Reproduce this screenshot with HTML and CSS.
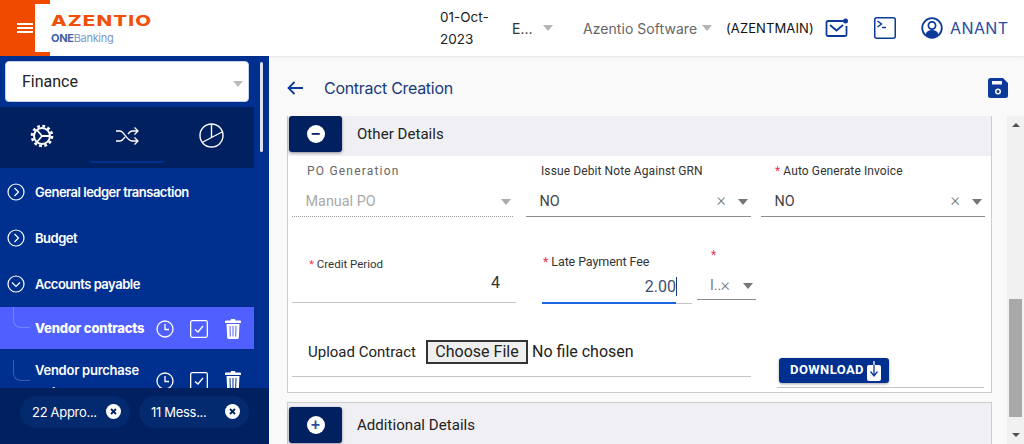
FILE: index.html
```html
<!DOCTYPE html>
<html lang="en">
<head>
    <meta charset="UTF-8">
    <title>Contract Creation</title>
    <link rel="stylesheet" href="styles.css">
</head>
<body>
<header class="topbar">
    <div class="menu-block">
        <div class="menu-lines"><i></i><i></i><i></i></div>
        <div class="logo-notch"></div>
    </div>
    <div class="logo">
        <div class="logo-name">AZENTIO</div>
        <div class="logo-sub"><b>ONE</b>Banking</div>
    </div>
    <div class="top-date">01-Oct-<br>2023</div>
    <div class="top-lang">E...</div>
    <span class="caret top-caret-lang"></span>
    <div class="top-company">Azentio Software</div>
    <span class="caret top-caret-company"></span>
    <div class="top-code">(AZENTMAIN)</div>
    <svg class="top-mail" width="24" height="20" viewBox="0 0 24 20" fill="none" stroke="#0b3a9a" stroke-width="1.800">
        <path d="M18 3H3a1.500 1.500 0 0 0-1.500 1.500v12A1.500 1.500 0 0 0 3 18h17a1.500 1.500 0 0 0 1.500-1.500V8"/>
        <path d="M5 7l6.500 5.500L18 7"/>
        <circle cx="20.500" cy="3" r="2.500" fill="#0b3a9a" stroke="none"/>
    </svg>
    <svg class="top-term" width="22" height="22" viewBox="0 0 22 22" fill="none" stroke="#0b3a9a" stroke-width="1.500">
        <rect x="0.750" y="0.750" width="20.500" height="20.500" rx="2"/>
        <path d="M3.500 4l4 3-4 3M8 10.500h4"/>
    </svg>
    <svg class="top-user" width="22" height="22" viewBox="0 0 22 22">
        <circle cx="11" cy="11" r="9.800" fill="none" stroke="#0b3a9a" stroke-width="1.800"/>
        <circle cx="11" cy="8.500" r="3.600" fill="none" stroke="#0b3a9a" stroke-width="1.800"/>
        <path d="M4.500 17.500c1-3.500 4-4.500 6.500-4.500s5.500 1 6.500 4.500A9.800 9.800 0 0 1 11 20.800a9.800 9.800 0 0 1-6.500-3.300z" fill="#0b3a9a"/>
    </svg>
    <div class="top-name">ANANT</div>
</header>

<div class="layout">
    <aside class="sidebar">
        <div class="module-wrap">
            <div class="module-select">Finance<span class="caret module-caret"></span></div>
        </div>
        <div class="side-tabs">
            <div class="side-tab">
                <svg width="24" height="24" viewBox="0 0 24 24" fill="none" stroke="#fff">
                    <circle cx="12" cy="12" r="8" stroke-width="2"/>
                    <circle cx="12" cy="12" r="10" stroke-width="2.600" stroke-dasharray="2.800 2.440"/>
                    <path d="M12 12L7 6M12 12L7 18M12 12h8" stroke-width="1.800"/>
                </svg>
            </div>
            <div class="side-tab side-tab-on">
                <svg width="24" height="20" viewBox="0 0 24 20" fill="none" stroke="#fff" stroke-width="1.300">
                    <path d="M1 5h4c4 0 7 10 12 10h6M1 15h4c2 0 3.500-2 5-4M13 8c1.300-1.700 2.500-3 4-3h6"/>
                    <path d="M19.500 1.500L23 5l-3.500 3.500M19.500 11.500L23 15l-3.500 3.500"/>
                </svg>
            </div>
            <div class="side-tab">
                <svg width="25" height="25" viewBox="0 0 25 25" fill="none" stroke="#fff" stroke-width="1.400">
                    <circle cx="12.500" cy="12.500" r="11.500"/>
                    <path d="M12.500 1v13M3 19.500l20-10.500"/>
                </svg>
            </div>
        </div>
        <nav class="side-nav">
            <div class="nav-item">
                <svg width="18" height="18" viewBox="0 0 18 18" fill="none" stroke="#fff" stroke-width="1.200"><circle cx="9" cy="9" r="8"/><path d="M7.500 5l4 4-4 4"/></svg>
                <span>General ledger transaction</span>
            </div>
            <div class="nav-item">
                <svg width="18" height="18" viewBox="0 0 18 18" fill="none" stroke="#fff" stroke-width="1.200"><circle cx="9" cy="9" r="8"/><path d="M7.500 5l4 4-4 4"/></svg>
                <span>Budget</span>
            </div>
            <div class="nav-item">
                <svg width="18" height="18" viewBox="0 0 18 18" fill="none" stroke="#fff" stroke-width="1.200"><circle cx="9" cy="9" r="8"/><path d="M5 7.500l4 4 4-4"/></svg>
                <span>Accounts payable</span>
            </div>
            <div class="sub-item sub-item-on">
                <div class="sub-line"></div>
                <div class="sub-text">Vendor contracts</div>
                <div class="sub-icons">
                    <svg width="18" height="18" viewBox="0 0 18 18" fill="none" stroke="#fff" stroke-width="1.300"><circle cx="9" cy="9" r="8"/><path d="M9 4v5.500h4"/></svg>
                    <svg width="18" height="18" viewBox="0 0 18 18" fill="none" stroke="#fff" stroke-width="1.300"><rect x="0.650" y="0.650" width="16.700" height="16.700" rx="1.500"/><path d="M5 9.500l3 2.500 5-6"/></svg>
                    <svg width="16" height="20" viewBox="0 0 16 20" fill="#fff"><path d="M6 0h4l.5 1.500H15a1 1 0 0 1 1 1V4H0V2.500a1 1 0 0 1 1-1h4.500z"/><path fill-rule="evenodd" d="M1.500 5h13l-.7 13.500a1.500 1.500 0 0 1-1.500 1.500H3.700a1.500 1.500 0 0 1-1.500-1.500zM4.500 7l.3 10.500h1L5.500 7zM7.500 7v10.500h1V7zM10.500 7l-.3 10.500h1l.3-10.500z"/></svg>
                </div>
            </div>
            <div class="sub-item sub-item-next">
                <div class="sub-line"></div>
                <div class="sub-text">Vendor purchase orders</div>
                <div class="sub-icons">
                    <svg width="18" height="18" viewBox="0 0 18 18" fill="none" stroke="#fff" stroke-width="1.300"><circle cx="9" cy="9" r="8"/><path d="M9 4v5.500h4"/></svg>
                    <svg width="18" height="18" viewBox="0 0 18 18" fill="none" stroke="#fff" stroke-width="1.300"><rect x="0.650" y="0.650" width="16.700" height="16.700" rx="1.500"/><path d="M5 9.500l3 2.500 5-6"/></svg>
                    <svg width="16" height="20" viewBox="0 0 16 20" fill="#fff"><path d="M6 0h4l.5 1.500H15a1 1 0 0 1 1 1V4H0V2.500a1 1 0 0 1 1-1h4.500z"/><path fill-rule="evenodd" d="M1.500 5h13l-.7 13.500a1.500 1.500 0 0 1-1.500 1.500H3.700a1.500 1.500 0 0 1-1.500-1.500zM4.500 7l.3 10.500h1L5.500 7zM7.500 7v10.500h1V7zM10.500 7l-.3 10.500h1l.3-10.500z"/></svg>
                </div>
            </div>
        </nav>
        <div class="side-foot">
            <div class="chip">
                <span>22 Appro...</span>
                <svg width="15" height="15" viewBox="0 0 15 15"><circle cx="7.500" cy="7.500" r="7.500" fill="#fff"/><path d="M5 5l5 5M10 5l-5 5" stroke="#00205f" stroke-width="1.800"/></svg>
            </div>
            <div class="chip">
                <span>11 Mess...</span>
                <svg width="15" height="15" viewBox="0 0 15 15"><circle cx="7.500" cy="7.500" r="7.500" fill="#fff"/><path d="M5 5l5 5M10 5l-5 5" stroke="#00205f" stroke-width="1.800"/></svg>
            </div>
        </div>
        <div class="side-thumb"></div>
    </aside>

    <main class="main">
        <div class="title-bar">
            <svg class="back-arrow" width="16" height="14" viewBox="0 0 16 14" fill="none" stroke="#0b3a9a" stroke-width="1.800"><path d="M16 7H1.500M7.500 1l-6 6 6 6"/></svg>
            <div class="page-title">Contract Creation</div>
            <svg class="save-icon" width="20" height="20" viewBox="0 0 20 20">
                <path fill-rule="evenodd" fill="#0b3a9a" d="M2.500 0h12.500l5 5v12.500a2.500 2.500 0 0 1-2.500 2.500h-15a2.500 2.500 0 0 1-2.500-2.500v-15a2.500 2.500 0 0 1 2.500-2.500zM4 3v3.500h10V3zM10 10.500a3 3 0 1 0 0 6 3 3 0 0 0 0-6zM10 12a1.500 1.500 0 1 1 0 3 1.500 1.500 0 0 1 0-3z"/>
            </svg>
        </div>
        <div class="scroll-area">
            <div class="content">
                <section class="panel">
                    <div class="panel-head">
                        <div class="panel-btn"><span class="round-icon">&minus;</span></div>
                        <div class="panel-title">Other Details</div>
                    </div>
                    <div class="row row-one">
                        <div class="field f-po field-off">
                            <label class="label-po">PO Generation</label>
                            <div class="value">Manual PO<span class="caret field-caret"></span></div>
                        </div>
                        <div class="field f-debit">
                            <label>Issue Debit Note Against GRN</label>
                            <div class="value">NO<span class="clear">&times;</span><span class="caret field-caret"></span></div>
                        </div>
                        <div class="field f-auto">
                            <label><em>*</em> Auto Generate Invoice</label>
                            <div class="value">NO<span class="clear">&times;</span><span class="caret field-caret"></span></div>
                        </div>
                    </div>
                    <div class="row row-two">
                        <div class="field f-credit">
                            <label><em>*</em> Credit Period</label>
                            <div class="value value-num">4</div>
                        </div>
                        <div class="field f-late">
                            <label><em>*</em> Late Payment Fee</label>
                            <div class="value value-num">2.00<span class="cursor"></span></div>
                            <div class="focus-line"></div>
                        </div>
                        <div class="field f-unit">
                            <label><em>*</em></label>
                            <div class="value">I..<span class="clear">&times;</span><span class="caret field-caret"></span></div>
                        </div>
                    </div>
                    <div class="row row-three">
                        <div class="upload">
                            <span class="upload-label">Upload Contract</span>
                            <button class="file-btn">Choose File</button>
                            <span class="file-none">No file chosen</span>
                        </div>
                        <div class="download-wrap">
                            <button class="download-btn">DOWNLOAD
                                <svg width="14" height="20" viewBox="0 0 14 20"><rect x="0" y="4" width="14" height="16" rx="2" fill="#fff"/><path d="M7 4v11M3.500 10.500L7 15l3.500-4.500" fill="none" stroke="#0b3a9a" stroke-width="1.300"/><path d="M7 0v4" stroke="#fff" stroke-width="1.300"/></svg>
                            </button>
                        </div>
                    </div>
                </section>
                <section class="panel panel-closed">
                    <div class="panel-head">
                        <div class="panel-btn"><span class="round-icon round-plus">+</span></div>
                        <div class="panel-title">Additional Details</div>
                    </div>
                </section>
            </div>
            <div class="main-scroll">
                <span class="arrow-up"></span>
                <div class="main-thumb"></div>
                <span class="arrow-down"></span>
            </div>
        </div>
    </main>
</div>
</body>
</html>
```

FILE: styles.css
```css
*{
    margin: 0;padding: 0;
    box-sizing: border-box;
}
body{
    width: 1024px;
    height: 444px;
    overflow: hidden;
    font-family: Inter, "Liberation Sans", sans-serif;
    background: #f9f9f9;
}
.caret{
    display: inline-block;
    width: 0;height: 0;
    border-left: 5px solid transparent;
    border-right: 5px solid transparent;
    border-top: 6px solid #b5b5b5;
}

/* top bar */
.topbar{
    height: 56px;
    display: flex;
    align-items: center;
    background: #fff;
    box-shadow: 0 1px 2px rgba(0,0,0,.08);
    position: relative;
}
.menu-block{
    width: 50px;
    height: 56px;
    background: #f04a00;
    position: relative;
    flex: none;
}
.menu-lines{
    position: absolute;
    left: 17px;top: 23px;
    width: 16px;
}
.menu-lines i{
    display: block;
    height: 2px;
    background: #fff;
    margin-bottom: 2px;
}
.logo-notch{
    position: absolute;
    left: 35px;top: 4px;
    width: 15px;height: 48px;
    background: #fff;
}
.logo{
    width: 390px;
    padding-left: 1px;
    flex: none;
}
.logo-name{
    font: 800 14.500px/14px Inter, sans-serif;
    letter-spacing: .8px;
    color: #f0500a;
    transform: scaleX(1.41);
    transform-origin: left;
    margin-top: 2px;
}
.logo-sub{
    font: 400 11px/14px Inter, sans-serif;
    letter-spacing: -.3px;
    color: #7d97c6;
    margin-top: 3px;
}
.logo-sub b{
    font-weight: 700;
    color: #3f5ea8;
}
.top-date{
    width: 72px;
    font-size: 13.500px;
    line-height: 22px;
    color: #222;
    flex: none;
}
.top-lang{
    width: 31px;
    font-size: 14px;
    color: #333;
    flex: none;
}
.top-caret-lang{margin-right: 30px;flex: none}
.top-company{
    width: 119px;
    font-size: 14px;
    letter-spacing: .05px;
    color: #666;
    white-space: nowrap;
    flex: none;
}
.top-caret-company{margin-right: 15px;flex: none}
.top-code{
    width: 99px;
    font-size: 13px;
    letter-spacing: .1px;
    color: #111;
    white-space: nowrap;
    flex: none;
    margin-left: -1px;
}
.top-mail{flex: none;margin-right: 25px}
.top-term{flex: none;margin-right: 25px}
.top-user{flex: none;margin-right: 7px}
.top-name{
    font-size: 16px;
    color: #2a4d9f;
    letter-spacing: .4px;
}

.layout{
    display: flex;
    height: 388px;
}

/* sidebar */
.sidebar{
    width: 269px;
    background: #00308f;
    position: relative;
    display: flex;
    flex-direction: column;
    overflow: hidden;
    flex: none;
}
.module-wrap{
    height: 51px;
    padding: 5px 0 0 5px;
    flex: none;
}
.module-select{
    width: 244px;
    height: 41px;
    background: #fff;
    border: 1px solid #c6d0e6;
    border-radius: 4px;
    font: 16px/39px Roboto, sans-serif;
    color: #222;
    padding-left: 16px;
    position: relative;
}
.module-caret{
    position: absolute;
    right: 5px;top: 19px;
    border-top-color: #bbb;
}
.side-tabs{
    width: 254px;
    height: 61px;
    background: #002060;
    display: flex;
    flex: none;
}
.side-tab{
    width: 84.600px;
    display: flex;
    justify-content: center;
    align-items: center;
    padding-bottom: 4px;
    position: relative;
}
.side-tab-on::after{
    content: "";
    position: absolute;
    left: 5px;right: 5px;bottom: 5px;
    height: 2px;
    background: #00308f;
}
.side-nav{
    flex: 1;
    padding-top: 1px;
    overflow: hidden;
}
.nav-item{
    height: 46px;
    display: flex;
    align-items: center;
    padding-left: 7px;
    gap: 10px;
    font-size: 13px;
    font-weight: 600;
    letter-spacing: -.5px;
    color: #fff;
}
.sub-item{
    width: 254px;
    height: 42px;
    display: flex;
    position: relative;
    align-items: flex-start;
    padding: 10px 0 0 35px;
    color: #fff;
    font-size: 13px;
    font-weight: 600;
    letter-spacing: -.25px;
}
.sub-item-on{
    background: #5060ff;
    font-weight: 800;
    letter-spacing: -.15px;
}
.sub-item-next{height: 60px}
.sub-line{
    position: absolute;
    left: 13px;top: 0;
    width: 17px;height: 21px;
    border-left: 1px solid #7484ff;
    border-bottom: 1px solid #7484ff;
    border-bottom-left-radius: 8px;
}
.sub-item-next .sub-line{
    top: 11px;
    border-color: #3a5cb0;
}
.sub-text{
    width: 121px;
    line-height: 22px;
    flex: none;
}
.sub-icons{
    position: absolute;
    left: 156px;top: 12px;
    display: flex;
    align-items: center;
    gap: 16px;
}
.sub-item-next .sub-icons{top: 22px}
.sub-item .sub-icons svg:last-child{margin-left: 1px}
.side-foot{
    height: 56px;
    background: #00205f;
    padding: 8px 0 0 20px;
    display: flex;
    gap: 9px;
    flex: none;
    position: relative;
}
.chip{
    width: 110px;
    height: 32px;
    border-radius: 16px;
    background: #03296f;
    display: flex;
    align-items: center;
    padding-left: 12px;
    font-size: 13px;
    letter-spacing: -.3px;
    color: #fff;
    position: relative;
}
.chip svg{
    position: absolute;
    right: 9px;top: 8px;
}
.side-thumb{
    position: absolute;
    left: 260px;top: 6px;
    width: 3px;height: 90px;
    background: #dfe3ee;
    border-radius: 2px;
}

/* main */
.main{
    flex: 1;
    display: flex;
    flex-direction: column;
    min-width: 0;
}
.title-bar{
    height: 60px;
    display: flex;
    align-items: center;
    padding: 4px 16px 0 18px;
    flex: none;
}
.page-title{
    margin-left: 13px;
    flex: 1;
    font-size: 16px;
    color: #1a3a7a;
    letter-spacing: -.3px;
}
.back-arrow{
    width: 16px;
    margin-right: 8px;
}
.scroll-area{
    flex: 1;
    display: flex;
    overflow: hidden;
    min-height: 0;
}
.content{
    width: 738px;
    padding-left: 18px;
    flex: none;
}
.panel{
    width: 705px;
    height: 277px;
    border: 1px solid #ccc;
    border-top: 0;
    background: #fff;
}
.panel-closed{
    margin-top: 9px;
    background: #efeff4;
    border-top: 1px solid #ccc;
    height: 50px;
}
.panel-head{
    height: 40px;
    background: #efeff4;
    display: flex;
    padding-left: 1px;
}
.panel-closed .panel-head{padding-top: 4px;height: 48px}
.panel-btn{
    width: 53px;
    height: 36px;
    background: #002060;
    border-radius: 3px;
    box-shadow: 0 1px 3px rgba(0,0,0,.4);
    display: flex;
    justify-content: center;
    align-items: center;
    flex: none;
}
.round-icon{
    width: 18px;height: 18px;
    border-radius: 50%;
    background: #fff;
    color: #002060;
    font: 700 16px/18px "Liberation Sans", sans-serif;
    text-align: center;
}
.round-plus{color: #2a4d9f}
.panel-title{
    margin-left: 15px;
    font: 15px/37px Roboto, sans-serif;
    letter-spacing: .05px;
    color: #222;
}

/* form */
.row{
    display: flex;
    padding-left: 4px;
    font-family: Roboto, sans-serif;
}
.row-one{height: 61px}
.row-two{height: 87px}
.row-three{height: 89px}
.field{
    position: relative;
    border-bottom: 1px solid #8c8c8c;
    align-self: flex-end;
}
.field label{
    display: block;
    font-size: 12px;
    letter-spacing: .1px;
    color: #333;
    line-height: 16px;
}
.field em{
    color: #e8364f;
    font-style: normal;
}
.value{
    height: 30px;
    font-size: 14.400px;
    line-height: 32px;
    color: #444;
    padding-left: 13.500px;
    position: relative;
}
.value-num{
    font-size: 16px;
    text-align: right;
    padding: 0 16px 0 0;
    color: #333;
}
.field-caret{
    position: absolute;
    right: 3px;top: 13px;
    border-top-color: #777;
}
.clear{
    position: absolute;
    right: 25px;top: -2px;
    font-size: 18px;
    font-weight: 300;
    color: #777;
}
.f-po{width: 221px;margin-right: 13px;height: 54px}
.f-debit{width: 225px;margin-right: 10px;height: 54px}
.f-auto{width: 224px;height: 54px}
.f-po label,.f-debit label,.f-auto label{margin-bottom: 7px}
.field-off{border-bottom: 1px dotted #999}
.label-po{
    padding-left: 15px;
    letter-spacing: 1.200px !important;
    color: #666 !important;
}
.field-off .value{color: #aaa}
.field-off .field-caret{border-top-color: #aaa;right: 2px}
.f-debit label{padding-left: 15px}
.f-auto label{padding-left: 14px}
.f-credit{
    width: 224px;
    margin-right: 26px;
    height: 46px;
    border-bottom-color: #c4c4c4;
    margin-bottom: 1px;
}
.f-credit label{padding-left: 17px;line-height: 14px;font-size: 11.500px;letter-spacing: 0}
.f-credit .value{height: 31px;line-height: 24px}
.f-late{
    width: 150px;
    margin-right: 5px;
    height: 50px;
    border-bottom-color: #c4c4c4;
}
.f-late label{line-height: 16px;font-size: 12.500px;padding-left: 1px;letter-spacing: -.1px}
.f-late .value{height: 33px;line-height: 33px;font-size: 16px;color: #3f5070}
.focus-line{
    position: absolute;
    left: 0;bottom: -1px;
    width: 134px;height: 2px;
    background: #1a66e0;
}
.cursor{
    position: absolute;
    right: 15px;top: 7px;
    width: 1px;height: 19px;
    background: #1a3a7a;
}
.f-unit{
    width: 59px;
    height: 53px;
    align-self: flex-end;
    margin-bottom: 4px;
}
.f-unit label{padding-left: 14px;height: 23px}
.f-unit .value{height: 29px;line-height: 30px;font-size: 14px;color: #777;padding-left: 13px}
.f-unit .clear{right: 26px;top: 0}
.upload{
    width: 459px;
    height: 73px;
    align-self: flex-start;
    border-bottom: 1px solid #c4c4c4;
    padding: 36px 0 0 16px;
    display: flex;
    align-items: flex-start;
}
.upload-label{
    font-size: 15px;
    line-height: 24px;
    color: #222;
    width: 118px;
    flex: none;
}
.file-btn{
    width: 102px;
    height: 24px;
    background: #efefef;
    border: 2px solid #333;
    font: 16px/20px Roboto, sans-serif;
    color: #222;
    flex: none;
}
.file-none{
    font-size: 16px;
    line-height: 24px;
    color: #222;
    margin-left: 4px;
}
.download-wrap{
    width: 207px;
    height: 84px;
    margin-left: 26px;
    align-self: flex-start;
    border-bottom: 1px solid #c4c4c4;
    padding: 54px 0 0 2px;
}
.download-btn{
    width: 110px;
    height: 25px;
    background: #00308f;
    border: 0;
    border-radius: 3px;
    box-shadow: 0 1px 3px rgba(0,0,0,.35);
    color: #fff;
    font: 700 13px/23px Roboto, sans-serif;
    letter-spacing: .4px;
    display: flex;
    align-items: flex-end;
    justify-content: center;
    gap: 3px;
    padding: 0 0 2px 3px;
}
.main-scroll{
    width: 17px;
    background: #f1f1f1;
    position: relative;
}
.arrow-up,.arrow-down{
    position: absolute;
    left: 5px;
    width: 0;height: 0;
    border-left: 4px solid transparent;
    border-right: 4px solid transparent;
}
.arrow-up{top: 7px;border-bottom: 4px solid #505050}
.arrow-down{bottom: 7px;border-top: 4px solid #505050}
.main-thumb{
    position: absolute;
    left: 2px;top: 183px;
    width: 13px;height: 118px;
    background: #a8a8a8;
}
```
